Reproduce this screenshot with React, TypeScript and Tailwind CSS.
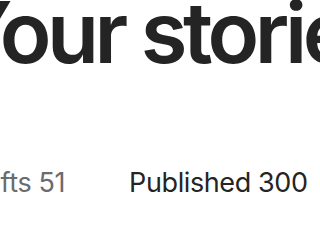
export default function App() {
  return (
    <div className="w-[320px] h-[204px] overflow-hidden bg-white" style={{ fontFamily: 'Inter, "Noto Sans", sans-serif' }}>
      <div className="-ml-[48px] w-[600px]">
        <h1 className="-mt-[10px] text-[85px] leading-none font-semibold tracking-[-4.5px] text-[#242424] whitespace-nowrap">
          Your stories
        </h1>
        <div className="mt-[94px] ml-[5px] flex items-baseline gap-[64px] text-[27px] leading-none tracking-[-0.4px] whitespace-nowrap">
          <span className="text-[#6b6b6b]">Drafts 51</span>
          <span className="text-[#242424]">Published 300</span>
        </div>
      </div>
    </div>
  )
}
